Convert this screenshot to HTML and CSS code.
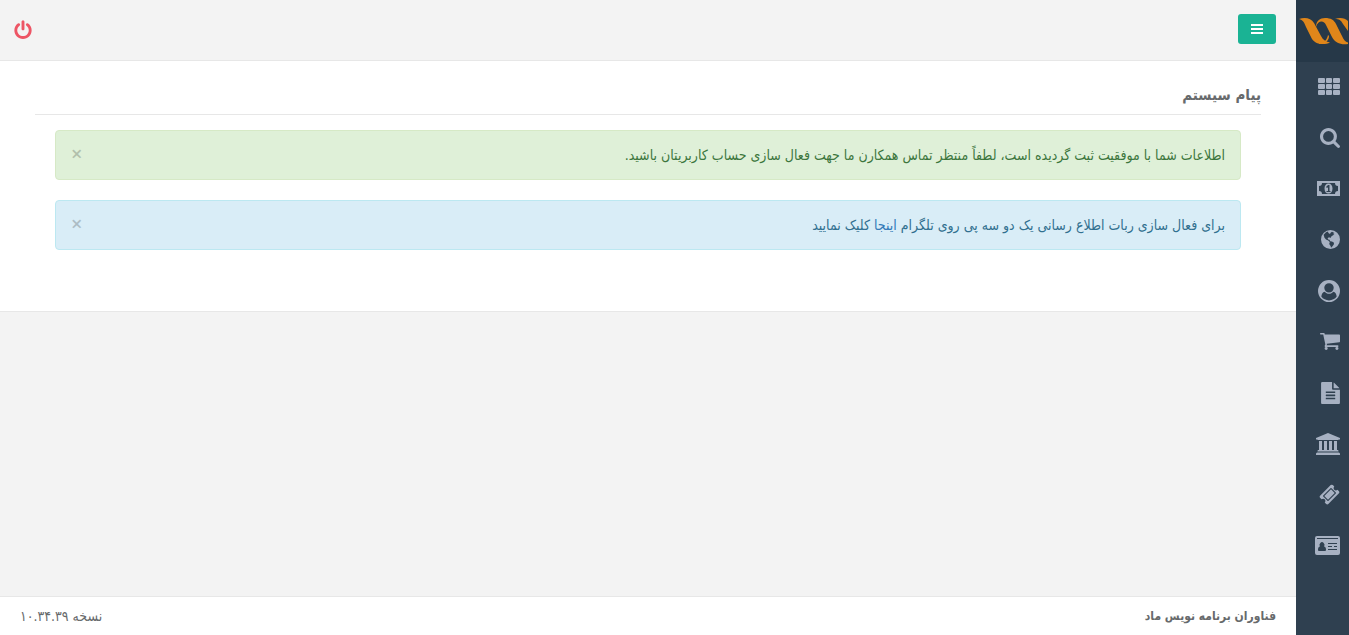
FILE: index.html
```html
<!DOCTYPE html>
<html lang="fa" dir="rtl">
<head>
    <meta charset="UTF-8">
    <meta name="viewport" content="width=device-width, initial-scale=1.0">
    <title>پیام سیستم</title>
    <link rel="stylesheet" href="styles.css">
</head>
<body>
    <nav class="sidebar">
        <a href="#" class="logo" aria-label="ماد">
            <svg width="49" height="26" viewBox="0 1 49 26" preserveAspectRatio="none">
                <path d="M0 2C6 0 12 1 15 6L22 19C24 23 27 25 31 25.500C26 28 17 28 13 22L7 10C5 5 4 3 0 2Z"/>
                <path d="M17 10C17 4 21 1 26 1C32 1 35 3 37 7L43 19C45 23 46 25 49 25.500V27C42 28 36 26 33 20L27 8C25 3 19 3 17 10Z"/>
                <path d="M20 26C25 26 28 23 29 18L30 19C30 23 27 27 20 27Z"/>
                <path d="M36 2C41 0 46 1 49 4V14L44 7C42 3 40 2 36 2Z"/>
            </svg>
        </a>
        <ul class="menu">
            <li><a href="#" aria-label="داشبورد"><svg width="22" height="18" viewBox="0 0 22 18"><path d="M1 0h5q1 0 1 1v3q0 1-1 1H1q-1 0-1-1V1q0-1 1-1zM9 0h4q1 0 1 1v3q0 1-1 1H9q-1 0-1-1V1q0-1 1-1zM16 0h5q1 0 1 1v3q0 1-1 1h-5q-1 0-1-1V1q0-1 1-1zM1 6h5q1 0 1 1v3q0 1-1 1H1q-1 0-1-1V7q0-1 1-1zM9 6h4q1 0 1 1v3q0 1-1 1H9q-1 0-1-1V7q0-1 1-1zM16 6h5q1 0 1 1v3q0 1-1 1h-5q-1 0-1-1V7q0-1 1-1zM1 12h5q1 0 1 1v3q0 1-1 1H1q-1 0-1-1v-3q0-1 1-1zM9 12h4q1 0 1 1v3q0 1-1 1H9q-1 0-1-1v-3q0-1 1-1zM16 12h5q1 0 1 1v3q0 1-1 1h-5q-1 0-1-1v-3q0-1 1-1z"/></svg></a></li>
            <li><a href="#" aria-label="جستجو"><svg width="20" height="20" viewBox="64 128 1664 1664"><path d="M1216 832q0-185-131.500-316.500t-316.500-131.500-316.500 131.500-131.500 316.500 131.500 316.500 316.500 131.500 316.500-131.500 131.500-316.500zm512 832q0 52-38 90t-90 38q-54 0-90-38l-343-342q-179 124-399 124-143 0-273.500-55.500t-225-150-150-225-55.500-273.500 55.500-273.500 150-225 225-150 273.500-55.500 273.500 55.500 225 150 150 225 55.500 273.500q0 220-124 399l343 343q37 37 37 90z"/></svg></a></li>
            <li><a href="#" aria-label="مالی"><svg width="23" height="15" viewBox="0 0 23 15"><path fill-rule="evenodd" d="M0 0H23V15H0zM5 2Q5 5 2 5V10Q5 10 5 13H18Q18 10 21 10V5Q18 5 18 2zM11.500 2.500C14 2.500 15.500 4.500 15.500 7.500S14 12.500 11.500 12.500 7.500 10.500 7.500 7.500 9 2.500 11.500 2.500zM9.500 11H13.500V10H12.500V4H11L9 6 10 7 11 6.200V10H9.500z"/></svg></a></li>
            <li><a href="#" aria-label="وب سایت"><svg width="19" height="19" viewBox="0 0 19 19"><path fill-rule="evenodd" d="M9.500 0a9.500 9.500 0 1 1 0 19a9.500 9.500 0 1 1 0-19zM7 1.600L5 2.300 2.600 4.800 3.500 7.800 5 9.400 7.200 10.600 8.800 12 8.200 14 9.700 16.200 10 17.700 11.300 16.400 12.800 14.600 13 12.700 11 11.600 9.200 11.200 8.500 9.800 7.200 9.400 6.600 8.200 8 7.200 9.600 8 10 6.700 12 5.200 13.400 4.800 12 3.900 13.500 3 11 1.700 9.600 2.700 9 4 7.400 3z"/></svg></a></li>
            <li><a href="#" aria-label="حساب کاربری"><svg width="22" height="22" viewBox="0 0 1792 1792"><path fill-rule="evenodd" d="M1523 1339q-22-155-87.500-257.500t-184.500-118.500q-67 74-159.500 115.500t-195.500 41.500-195.500-41.500-159.500-115.500q-119 16-184.500 118.500t-87.500 257.500q106 150 271 237.500t356 87.500 356-87.500 271-237.500zm-243-699q0-159-112.500-271.500t-271.500-112.500-271.500 112.500-112.500 271.500 112.500 271.500 271.500 112.500 271.500-112.500 112.500-271.500zm512 256q0 182-71 347.500t-190.500 286-285.500 191.500-349 71q-182 0-348-71t-286-191-191-286-71-348 71-348 191-286 286-191 348-71 348 71 286 191 191 286 71 348z"/></svg></a></li>
            <li><a href="#" aria-label="سبد خرید"><svg width="20" height="17" viewBox="64 256 1664 1408"><path d="M704 1536q0 52-38 90t-90 38-90-38-38-90 38-90 90-38 90 38 38 90zm896 0q0 52-38 90t-90 38-90-38-38-90 38-90 90-38 90 38 38 90zm128-1088v512q0 24-16.500 42.500t-40.500 21.500l-1044 122q13 60 13 70 0 16-24 64h920q26 0 45 19t19 45-19 45-45 19h-1024q-26 0-45-19t-19-45q0-11 8-31.500t16-36 21.500-40 15.500-29.500l-177-823h-204q-26 0-45-19t-19-45 19-45 45-19h256q16 0 28.500 6.500t19.500 15.500 13 24.500 8 26 5.500 29.500 4.500 26h1201q26 0 45 19t19 45z"/></svg></a></li>
            <li><a href="#" aria-label="گزارش"><svg width="19" height="22" viewBox="128 0 1536 1792"><path d="M1596 476q14 14 28 36h-472v-472q22 14 36 28zm-476 164h544v1056q0 40-28 68t-68 28h-1344q-40 0-68-28t-28-68v-1600q0-40 28-68t68-28h800v544q0 40 28 68t68 28zm160 736v-64q0-14-9-23t-23-9h-704q-14 0-23 9t-9 23v64q0 14 9 23t23 9h704q14 0 23-9t9-23zm0-256v-64q0-14-9-23t-23-9h-704q-14 0-23 9t-9 23v64q0 14 9 23t23 9h704q14 0 23-9t9-23zm0-256v-64q0-14-9-23t-23-9h-704q-14 0-23 9t-9 23v64q0 14 9 23t23 9h704q14 0 23-9t9-23z"/></svg></a></li>
            <li><a href="#" aria-label="بانک"><svg width="24" height="22" viewBox="0 0 24 22"><path d="M12 0L24 5V6.500H22.500Q22.500 7 22 7H2Q1.500 7 1.500 6.500H0V5zM3 8H6V17H8V8H11V17H13V8H16V17H18V8H21V17H22Q22.500 17 22.500 18.500H1.500Q1.500 17 2 17H3zM1 19.500H23L24 20.500V22H0V20.500z"/></svg></a></li>
            <li><a href="#" aria-label="تیکت"><svg width="21" height="21" viewBox="0 0 1792 1792"><path fill-rule="evenodd" d="M1024 452l316 316-572 572-316-316zm-211 979l618-618q19-19 19-45t-19-45l-362-362q-18-18-45-18t-45 18l-618 618q-19 19-19 45t19 45l362 362q18 18 45 18t45-18zm889-637l-907 908q-37 37-90.500 37t-90.500-37l-126-126q56-56 56-136t-56-136-136-56-136 56l-125-126q-37-37-37-90.500t37-90.500l907-906q37-37 90.500-37t90.500 37l125 125q-56 56-56 136t56 136 136 56 136-56l126 125q37 37 37 90.500t-37 90.500z"/></svg></a></li>
            <li><a href="#" aria-label="اطلاعات هویتی"><svg width="25" height="19" viewBox="0 0 25 19"><path fill-rule="evenodd" d="M2 0H23Q25 0 25 2V17Q25 19 23 19H2Q0 19 0 17V2Q0 0 2 0zM2 2V3H23V2zM3 14Q3 15 4 15H10Q11 15 11 14Q11 10.500 9 10.500A2.500 2.700 0 1 0 5 10.500Q3 10.500 3 14zM13 7V8H22V7zM13 10V11H17V10zM19 10V11H22V10zM13 13V14H22V13z"/></svg></a></li>
        </ul>
    </nav>

    <div class="page">
        <header class="topbar">
            <button type="button" class="menu-toggle" aria-label="منو">
                <svg width="12" height="10" viewBox="0 0 12 10"><path d="M0 0h12v2H0zM0 4h12v2H0zM0 8h12v2H0z"/></svg>
            </button>
            <a href="#" class="logout" aria-label="خروج">
                <svg width="18" height="18" viewBox="128 64 1536 1600"><path d="M1664 896q0 156-61 298t-164 245-245 164-298 61-298-61-245-164-164-245-61-298q0-182 80.500-343t226.500-270q43-32 95.500-25t83.500 50q32 42 24.500 94.500t-49.500 84.500q-98 74-151.500 181t-53.500 228q0 104 40.500 198.500t109.500 163.500 163.500 109.500 198.500 40.500 198.500-40.500 163.500-109.500 109.500-163.500 40.500-198.500q0-121-53.500-228t-151.500-181q-42-32-49.500-84.500t24.500-94.500q31-43 84-50t95 25q146 109 226.500 270t80.500 343zm-640-768v640q0 52-38 90t-90 38-90-38-38-90v-640q0-52 38-90t90-38 90 38 38 90z" overflow="visible"/></svg>
            </a>
        </header>

        <main class="content">
            <h1 class="title">پیام سیستم</h1>
            <div class="alerts">
                <div class="alert alert-success">
                    <span>اطلاعات شما با موفقیت ثبت گردیده است، لطفاً منتظر تماس همکارن ما جهت فعال سازی حساب کاربریتان باشید.</span>
                    <button type="button" class="close" aria-label="بستن">×</button>
                </div>
                <div class="alert alert-info">
                    <span>برای فعال سازی ربات اطلاع رسانی یک دو سه پی روی تلگرام <a href="#">اینجا</a> کلیک نمایید</span>
                    <button type="button" class="close" aria-label="بستن">×</button>
                </div>
            </div>
        </main>

        <footer class="footer">
            <strong>فناوران برنامه نویس ماد</strong>
            <span>نسخه ۱۰.۳۴.۳۹</span>
        </footer>
    </div>
</body>
</html>
```
FILE: styles.css
```css
* {
    box-sizing: border-box;
}
body {
    margin: 0;
    display: flex;
    min-height: 100vh;
    background-color: #2f4050;
    font-family: "DejaVu Sans Condensed", "DejaVu Sans", sans-serif;
    font-size: 14px;
    line-height: 18px;
    color: #676a6c;
}
a {
    color: #337ab7;
    text-decoration: none;
}
svg {
    display: block;
    overflow: visible;
    fill: currentColor;
}

/* Sidebar */
.sidebar {
    flex: none;
    width: 53px;
    overflow: hidden;
}
.logo {
    display: flex;
    align-items: center;
    height: 62px;
    padding-right: 1px;
    background-color: #263848;
    color: #e0861a;
}
.menu {
    list-style: none;
    margin: 0;
    padding: 0;
}
.menu a {
    display: flex;
    align-items: center;
    height: 51px;
    padding: 0 9px 2px 0;
    color: #a7b1c2;
}

/* Page */
.page {
    flex: 1;
    display: flex;
    flex-direction: column;
    background-color: #f3f3f3;
}
.topbar {
    display: flex;
    align-items: center;
    justify-content: space-between;
    height: 61px;
    padding: 0 20px 2px 14px;
    border-bottom: 1px solid #e7e7e7;
}
.menu-toggle {
    display: flex;
    align-items: center;
    justify-content: center;
    width: 38px;
    height: 30px;
    padding: 0;
    border: 0;
    border-radius: 3px;
    background-color: #1ab394;
    color: #fff;
    cursor: pointer;
}
.logout {
    padding-top: 2px;
    color: #ed5565;
}
.content {
    padding: 20px 35px 40px;
    background-color: #fff;
    border-bottom: 1px solid #e7e7e7;
}
.title {
    margin: 0;
    padding: 2px 0 7px;
    border-bottom: 1px solid #e7e7e7;
    font-size: 15px;
    line-height: 24px;
}
.alerts {
    padding: 15px 20px 1px;
}
.alert {
    display: flex;
    align-items: center;
    justify-content: space-between;
    margin-bottom: 20px;
    padding: 15px;
    border: 1px solid;
    border-radius: 4px;
}
.alert-success {
    background-color: #dff0d8;
    border-color: #d6e9c6;
    color: #3c763d;
}
.alert-info {
    background-color: #d9edf7;
    border-color: #bce8f1;
    color: #31708f;
}
.close {
    padding: 0 0 2px;
    border: 0;
    background: none;
    color: #000;
    font-family: "Open Sans", sans-serif;
    font-size: 20px;
    font-weight: 600;
    line-height: 16px;
    opacity: 0.2;
    cursor: pointer;
}
.footer {
    display: flex;
    justify-content: space-between;
    margin-top: auto;
    padding: 10px 20px;
    background-color: #fff;
    border-top: 1px solid #e7e7e7;
}
.footer strong {
    font-size: 12px;
}
```
